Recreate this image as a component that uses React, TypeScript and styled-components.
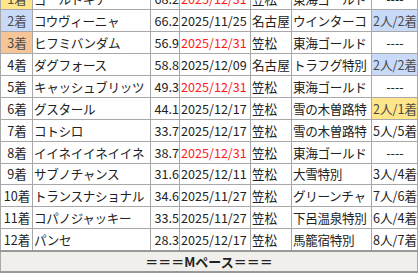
import React from "react";
import styled, { createGlobalStyle } from "styled-components";

const GlobalStyle = createGlobalStyle`
  html, body {
    margin: 0;
    padding: 0;
    background: #fff;
  }
  body {
    font-family: "Noto Sans CJK JP", "Noto Sans", sans-serif;
    color: #222;
  }
`;

const Viewport = styled.div`
  width: 420px;
  height: 280px;
  overflow: hidden;
  background: #fff;
`;

const Table = styled.table`
  margin-top: -12.6px;
  width: 417px;
  border-collapse: collapse;
  table-layout: fixed;
  font-size: 12.6px;
`;

const Row = styled.tr`
  height: 21.9px;
`;

type Tone = "gold" | "silver" | "bronze" | "none";

const toneBg: Record<Tone, string> = {
  gold: "#ffe68a",
  silver: "#c8daf7",
  bronze: "#f5c497",
  none: "transparent",
};

const Cell = styled.td<{
  $align?: "left" | "center" | "right";
  $tone?: Tone;
  $red?: boolean;
  $tight?: boolean;
}>`
  border: 1px solid #a8a8a8;
  padding: 0 0 1px 1px;
  white-space: nowrap;
  overflow: hidden;
  vertical-align: bottom;
  line-height: 19px;
  letter-spacing: ${(p) => (p.$tight ? "-0.35px" : "0")};
  text-align: ${(p) => p.$align || "left"};
  background: ${(p) => toneBg[p.$tone || "none"]};
  color: ${(p) => (p.$red ? "#ff1a1a" : p.$tone && p.$tone !== "none" ? "#4a4a4a" : "#222")};
`;

const PaceRow = styled.tr`
  height: 21px;
`;

const PaceCell = styled.td`
  border: 1px solid #a8a8a8;
  border-top: 2px solid #999;
  border-bottom: 2px solid #999;
  background: #f0efeb;
  text-align: center;
  font-weight: 700;
  font-size: 13px;
  color: #222;
  padding: 0;
  line-height: 19px;
`;

type Horse = {
  rank: number;
  name: string;
  weight: string;
  date: string;
  place: string;
  race: string;
  result: string;
  resultTone?: Tone;
};

const horses: Horse[] = [
  { rank: 1, name: "ゴールドギア", weight: "68.2", date: "2025/12/31", place: "笠松", race: "東海ゴールド", result: "----" },
  { rank: 2, name: "コウヴィーニャ", weight: "66.2", date: "2025/11/25", place: "名古屋", race: "ウインターコ", result: "2人/2着", resultTone: "silver" },
  { rank: 3, name: "ヒフミバンダム", weight: "56.9", date: "2025/12/31", place: "笠松", race: "東海ゴールド", result: "----" },
  { rank: 4, name: "ダグフォース", weight: "58.8", date: "2025/12/09", place: "名古屋", race: "トラフグ特別", result: "2人/2着", resultTone: "silver" },
  { rank: 5, name: "キャッシュブリッツ", weight: "49.3", date: "2025/12/31", place: "笠松", race: "東海ゴールド", result: "----" },
  { rank: 6, name: "グスタール", weight: "44.1", date: "2025/12/17", place: "笠松", race: "雪の木曽路特", result: "2人/1着", resultTone: "gold" },
  { rank: 7, name: "コトシロ", weight: "33.7", date: "2025/12/17", place: "笠松", race: "雪の木曽路特", result: "5人/5着" },
  { rank: 8, name: "イイネイイネイイネ", weight: "38.7", date: "2025/12/31", place: "笠松", race: "東海ゴールド", result: "----" },
  { rank: 9, name: "サブノチャンス", weight: "31.6", date: "2025/12/11", place: "笠松", race: "大雪特別", result: "3人/4着" },
  { rank: 10, name: "トランスナショナル", weight: "34.6", date: "2025/11/27", place: "笠松", race: "グリーンチャ", result: "7人/6着" },
  { rank: 11, name: "コパノジャッキー", weight: "33.5", date: "2025/11/27", place: "笠松", race: "下呂温泉特別", result: "6人/4着" },
  { rank: 12, name: "パンセ", weight: "28.3", date: "2025/12/17", place: "笠松", race: "馬籠宿特別", result: "8人/7着" },
];

const rankTone = (rank: number): Tone =>
  rank === 1 ? "gold" : rank === 2 ? "silver" : rank === 3 ? "bronze" : "none";

const widths = [32, 118, 29, 71, 41, 80, 46];

const App = () => {
  return (
    <>
      <GlobalStyle />
      <Viewport>
        <Table>
          <colgroup>
            {widths.map((w, i) => (
              <col key={i} style={{ width: w }} />
            ))}
          </colgroup>
          <tbody>
            {horses.map((h) => (
              <Row key={h.rank}>
                <Cell $align="center" $tone={rankTone(h.rank)}>
                  {h.rank}着
                </Cell>
                <Cell $tight>{h.name}</Cell>
                <Cell $align="right">{h.weight}</Cell>
                <Cell $red={h.date === "2025/12/31"}>{h.date}</Cell>
                <Cell>{h.place}</Cell>
                <Cell $tight>{h.race}</Cell>
                <Cell $align="center" $tone={h.resultTone}>
                  {h.result}
                </Cell>
              </Row>
            ))}
            <PaceRow>
              <PaceCell colSpan={7}>＝＝＝Mペース＝＝＝</PaceCell>
            </PaceRow>
          </tbody>
        </Table>
      </Viewport>
    </>
  );
};

export default App;
